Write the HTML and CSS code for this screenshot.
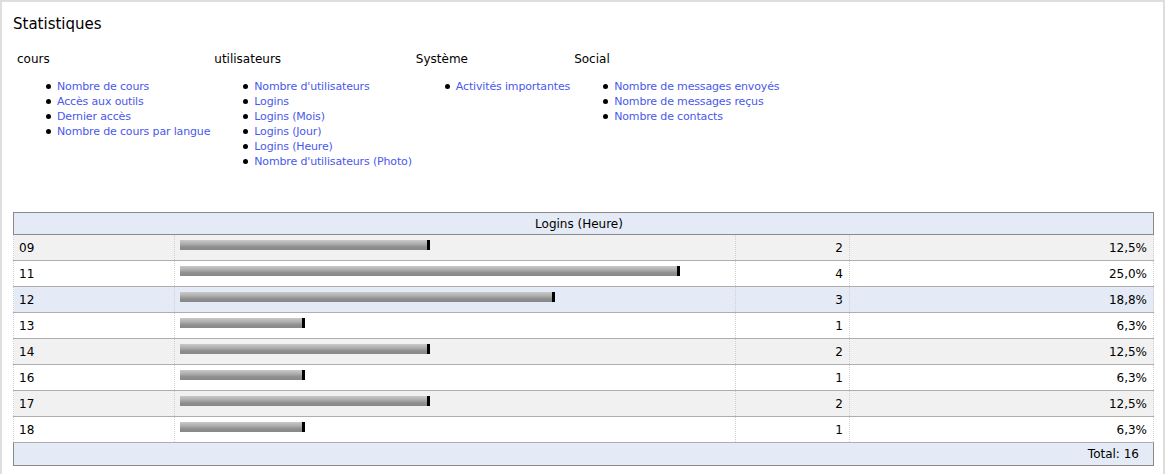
FILE: index.html
```html
<!DOCTYPE html>
<html lang="fr">
<head>
<meta charset="utf-8">
<title>Statistiques</title>
<link rel="stylesheet" href="styles.css">
</head>
<body>
<div class="page">
  <h1 class="title">Statistiques</h1>
  <div class="nav">
    <div class="col">
      <h3 class="col-title">cours</h3>
      <ul class="links">
        <li><a href="#">Nombre de cours</a></li>
        <li><a href="#">Accès aux outils</a></li>
        <li><a href="#">Dernier accès</a></li>
        <li><a href="#">Nombre de cours par langue</a></li>
      </ul>
    </div>
    <div class="col">
      <h3 class="col-title">utilisateurs</h3>
      <ul class="links">
        <li><a href="#">Nombre d'utilisateurs</a></li>
        <li><a href="#">Logins</a></li>
        <li><a href="#">Logins (Mois)</a></li>
        <li><a href="#">Logins (Jour)</a></li>
        <li><a href="#">Logins (Heure)</a></li>
        <li><a href="#">Nombre d'utilisateurs (Photo)</a></li>
      </ul>
    </div>
    <div class="col">
      <h3 class="col-title">Système</h3>
      <ul class="links">
        <li><a href="#">Activités importantes</a></li>
      </ul>
    </div>
    <div class="col">
      <h3 class="col-title">Social</h3>
      <ul class="links">
        <li><a href="#">Nombre de messages envoyés</a></li>
        <li><a href="#">Nombre de messages reçus</a></li>
        <li><a href="#">Nombre de contacts</a></li>
      </ul>
    </div>
  </div>

  <table class="data">
    <colgroup>
      <col class="c1"><col class="c2"><col class="c3"><col class="c4">
    </colgroup>
    <thead>
      <tr><th colspan="4">Logins (Heure)</th></tr>
    </thead>
    <tbody>
      <tr class="odd"><td>09</td><td class="barcell"><span class="bar" style="width:250px"></span></td><td class="num">2</td><td class="num">12,5%</td></tr>
      <tr><td>11</td><td class="barcell"><span class="bar" style="width:500px"></span></td><td class="num">4</td><td class="num">25,0%</td></tr>
      <tr class="hover"><td>12</td><td class="barcell"><span class="bar" style="width:375px"></span></td><td class="num">3</td><td class="num">18,8%</td></tr>
      <tr><td>13</td><td class="barcell"><span class="bar" style="width:125px"></span></td><td class="num">1</td><td class="num">6,3%</td></tr>
      <tr class="odd"><td>14</td><td class="barcell"><span class="bar" style="width:250px"></span></td><td class="num">2</td><td class="num">12,5%</td></tr>
      <tr><td>16</td><td class="barcell"><span class="bar" style="width:125px"></span></td><td class="num">1</td><td class="num">6,3%</td></tr>
      <tr class="odd"><td>17</td><td class="barcell"><span class="bar" style="width:250px"></span></td><td class="num">2</td><td class="num">12,5%</td></tr>
      <tr><td>18</td><td class="barcell"><span class="bar" style="width:125px"></span></td><td class="num">1</td><td class="num">6,3%</td></tr>
    </tbody>
    <tfoot>
      <tr><td colspan="4" class="total">Total: 16</td></tr>
    </tfoot>
  </table>
</div>
</body>
</html>
```

FILE: styles.css
```css
html, body {
  margin: 0;
  padding: 0;
  background: #ffffff;
}
body {
  font-family: "DejaVu Sans", Verdana, sans-serif;
  color: #000;
  padding-right: 3px;
}
.page {
  border-left: 2px solid #dedede;
  border-top: 2px solid #dedede;
  border-right: 2px solid #dedede;
  padding: 14px 10px 8px 11px;
}
.title {
  font-size: 15px;
  font-weight: normal;
  line-height: 17px;
  margin: 0 0 19px 0;
}
.nav {
  display: flex;
  align-items: flex-start;
  gap: 4px;
  padding-left: 4px;
  margin-bottom: 43px;
}
.col-title {
  font-size: 12px;
  font-weight: normal;
  line-height: 15px;
  margin: 0 0 12px 0;
}
.links {
  margin: 0;
  padding-left: 40px;
  font-size: 11px;
  line-height: 15px;
  list-style: none;
}
.links li {
  position: relative;
}
.links li::before {
  content: "";
  position: absolute;
  left: -11px;
  top: 5px;
  width: 5px;
  height: 5px;
  border-radius: 50%;
  background: #000;
}
.links a {
  letter-spacing: -0.15px;
  color: #4a58ec;
  text-decoration: none;
  white-space: nowrap;
}
.data {
  width: 1140px;
  table-layout: fixed;
  border-collapse: collapse;
  font-size: 12px;
}
.c1 { width: 161px; }
.c2 { width: 561px; }
.c3 { width: 114px; }
.c4 { width: 304px; }
.data th {
  background: #e4ebf6;
  border: 1px solid #8a8a8a;
  font-weight: normal;
  height: 21px;
  padding: 0 9px 0 0;
  text-align: center;
  line-height: 20px;
}
.data tbody td {
  height: 25px;
  padding: 0 5px;
  border-left: 1px dotted #cfcfcf;
  border-right: 1px dotted #cfcfcf;
  border-bottom: 1px solid #aeaeae;
  vertical-align: middle;
}
.data tbody tr.odd td { background: #f1f1f1; }
.data tbody tr.hover td { background: #e4ebf6; }
.data td.num {
  text-align: right;
  padding-right: 6px;
}
.data td.barcell {
  vertical-align: top;
  padding-top: 5px;
  height: 20px;
}
.bar {
  display: block;
  height: 10px;
  box-sizing: border-box;
  border-right: 3px solid #000;
  background: linear-gradient(to bottom, #c9c9c9 0%, #b0b0b0 35%, #8e8e8e 70%, #888 100%);
}
.data tfoot td.total {
  background: #e4ebf6;
  border: 1px solid #8a8a8a;
  height: 22px;
  padding: 0 14px 0 0;
  text-align: right;
}
```
